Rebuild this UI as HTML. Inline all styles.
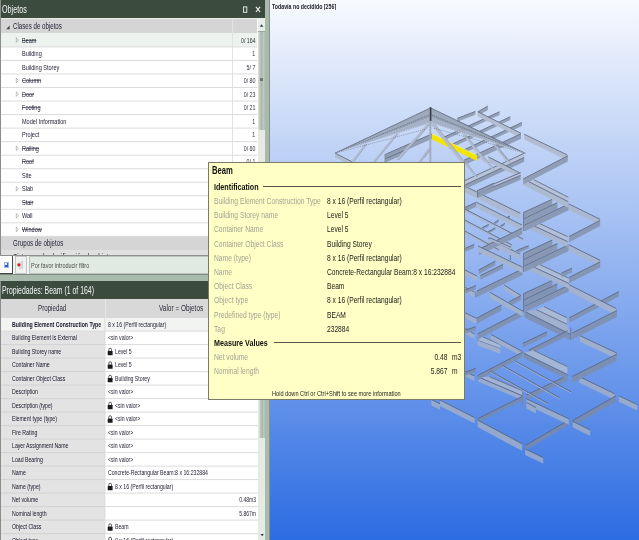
<!DOCTYPE html>
<html lang="es"><head><meta charset="utf-8"><title>Objetos</title>
<style>
html,body{margin:0;padding:0;}
body{width:639px;height:540px;overflow:hidden;position:relative;background:#fff;font-family:"Liberation Sans", sans-serif;}
.t{position:absolute;white-space:nowrap;display:block;}
.b{position:absolute;}
svg{position:absolute;left:0;top:0;}
</style></head><body>
<div class="b" style="left:0.00px;top:0.00px;width:265.20px;height:540.00px;background:#fff;"></div>
<div class="b" style="left:0.00px;top:0.00px;width:265.20px;height:17.70px;background:#3b4c3f;"></div>
<span class="t" style="left:2.20px;transform-origin:0 0;top:3.80px;font-size:20.80px;line-height:20.80px;color:#f4f4f4;font-weight:normal;transform:scale(0.3450,0.5);">Objetos</span>
<svg width="639" height="540" style="pointer-events:none"><rect x="243.6" y="6.9" width="3.2" height="5.4" fill="none" stroke="#f2f2f2" stroke-width="0.9"/><path d="M255.9 6.9 L260.1 12.0 M260.1 6.9 L255.9 12.0" stroke="#f4f4f4" stroke-width="1.1" fill="none"/></svg>
<div class="b" style="left:0.00px;top:17.70px;width:265.20px;height:1.70px;background:#e9eee9;"></div>
<div class="b" style="left:0.00px;top:19.40px;width:257.30px;height:14.00px;background:#d5d5d5;"></div>
<span class="t" style="left:12.70px;transform-origin:0 0;top:22.02px;font-size:17.20px;line-height:17.20px;color:#23233a;font-weight:normal;transform:scale(0.3575,0.5);">Clases de objetos</span>
<svg width="639" height="540" style="pointer-events:none"><path d="M6.2 29.2 L9.6 29.2 L9.6 25.6 Z" fill="#444"/></svg>
<div class="b" style="left:0.00px;top:33.40px;width:257.30px;height:13.53px;background:#eef2ee;"></div>
<span class="t" style="left:22.00px;transform-origin:0 0;top:36.52px;font-size:14.60px;line-height:14.60px;color:#1c1c30;font-weight:normal;transform:scale(0.3800,0.5);text-decoration:line-through;">Beam</span>
<span class="t" style="right:383.40px;transform-origin:100% 0;top:36.52px;font-size:14.60px;line-height:14.60px;color:#33333f;font-weight:normal;transform:scale(0.3600,0.5);">0/ 164</span>
<span class="t" style="left:22.00px;transform-origin:0 0;top:50.05px;font-size:14.60px;line-height:14.60px;color:#1c1c30;font-weight:normal;transform:scale(0.3800,0.5);">Building</span>
<span class="t" style="right:383.40px;transform-origin:100% 0;top:50.05px;font-size:14.60px;line-height:14.60px;color:#33333f;font-weight:normal;transform:scale(0.3600,0.5);">1</span>
<span class="t" style="left:22.00px;transform-origin:0 0;top:63.58px;font-size:14.60px;line-height:14.60px;color:#1c1c30;font-weight:normal;transform:scale(0.3800,0.5);">Building Storey</span>
<span class="t" style="right:383.40px;transform-origin:100% 0;top:63.58px;font-size:14.60px;line-height:14.60px;color:#33333f;font-weight:normal;transform:scale(0.3600,0.5);">5/ 7</span>
<span class="t" style="left:22.00px;transform-origin:0 0;top:77.11px;font-size:14.60px;line-height:14.60px;color:#1c1c30;font-weight:normal;transform:scale(0.3800,0.5);text-decoration:line-through;">Column</span>
<span class="t" style="right:383.40px;transform-origin:100% 0;top:77.11px;font-size:14.60px;line-height:14.60px;color:#33333f;font-weight:normal;transform:scale(0.3600,0.5);">0/ 80</span>
<span class="t" style="left:22.00px;transform-origin:0 0;top:90.64px;font-size:14.60px;line-height:14.60px;color:#1c1c30;font-weight:normal;transform:scale(0.3800,0.5);text-decoration:line-through;">Door</span>
<span class="t" style="right:383.40px;transform-origin:100% 0;top:90.64px;font-size:14.60px;line-height:14.60px;color:#33333f;font-weight:normal;transform:scale(0.3600,0.5);">0/ 23</span>
<span class="t" style="left:22.00px;transform-origin:0 0;top:104.17px;font-size:14.60px;line-height:14.60px;color:#1c1c30;font-weight:normal;transform:scale(0.3800,0.5);text-decoration:line-through;">Footing</span>
<span class="t" style="right:383.40px;transform-origin:100% 0;top:104.17px;font-size:14.60px;line-height:14.60px;color:#33333f;font-weight:normal;transform:scale(0.3600,0.5);">0/ 21</span>
<span class="t" style="left:22.00px;transform-origin:0 0;top:117.70px;font-size:14.60px;line-height:14.60px;color:#1c1c30;font-weight:normal;transform:scale(0.3800,0.5);">Model Information</span>
<span class="t" style="right:383.40px;transform-origin:100% 0;top:117.70px;font-size:14.60px;line-height:14.60px;color:#33333f;font-weight:normal;transform:scale(0.3600,0.5);">1</span>
<span class="t" style="left:22.00px;transform-origin:0 0;top:131.23px;font-size:14.60px;line-height:14.60px;color:#1c1c30;font-weight:normal;transform:scale(0.3800,0.5);">Project</span>
<span class="t" style="right:383.40px;transform-origin:100% 0;top:131.23px;font-size:14.60px;line-height:14.60px;color:#33333f;font-weight:normal;transform:scale(0.3600,0.5);">1</span>
<span class="t" style="left:22.00px;transform-origin:0 0;top:144.76px;font-size:14.60px;line-height:14.60px;color:#1c1c30;font-weight:normal;transform:scale(0.3800,0.5);text-decoration:line-through;">Railing</span>
<span class="t" style="right:383.40px;transform-origin:100% 0;top:144.76px;font-size:14.60px;line-height:14.60px;color:#33333f;font-weight:normal;transform:scale(0.3600,0.5);">0/ 60</span>
<span class="t" style="left:22.00px;transform-origin:0 0;top:158.29px;font-size:14.60px;line-height:14.60px;color:#1c1c30;font-weight:normal;transform:scale(0.3800,0.5);text-decoration:line-through;">Roof</span>
<span class="t" style="right:383.40px;transform-origin:100% 0;top:158.29px;font-size:14.60px;line-height:14.60px;color:#33333f;font-weight:normal;transform:scale(0.3600,0.5);">0/ 1</span>
<span class="t" style="left:22.00px;transform-origin:0 0;top:171.82px;font-size:14.60px;line-height:14.60px;color:#1c1c30;font-weight:normal;transform:scale(0.3800,0.5);">Site</span>
<span class="t" style="left:22.00px;transform-origin:0 0;top:185.35px;font-size:14.60px;line-height:14.60px;color:#1c1c30;font-weight:normal;transform:scale(0.3800,0.5);">Slab</span>
<span class="t" style="left:22.00px;transform-origin:0 0;top:198.88px;font-size:14.60px;line-height:14.60px;color:#1c1c30;font-weight:normal;transform:scale(0.3800,0.5);text-decoration:line-through;">Stair</span>
<span class="t" style="left:22.00px;transform-origin:0 0;top:212.41px;font-size:14.60px;line-height:14.60px;color:#1c1c30;font-weight:normal;transform:scale(0.3800,0.5);">Wall</span>
<span class="t" style="left:22.00px;transform-origin:0 0;top:225.94px;font-size:14.60px;line-height:14.60px;color:#1c1c30;font-weight:normal;transform:scale(0.3800,0.5);text-decoration:line-through;">Window</span>
<svg width="639" height="540" style="pointer-events:none"><path d="M16.3 37.60 L18.4 40.00 L16.3 42.40 Z" fill="none" stroke="#9a9a9a" stroke-width="0.6"/><path d="M16.3 78.19 L18.4 80.59 L16.3 82.99 Z" fill="none" stroke="#9a9a9a" stroke-width="0.6"/><path d="M16.3 91.72 L18.4 94.12 L16.3 96.52 Z" fill="none" stroke="#9a9a9a" stroke-width="0.6"/><path d="M16.3 145.84 L18.4 148.24 L16.3 150.64 Z" fill="none" stroke="#9a9a9a" stroke-width="0.6"/><path d="M16.3 186.43 L18.4 188.83 L16.3 191.23 Z" fill="none" stroke="#9a9a9a" stroke-width="0.6"/><path d="M16.3 213.49 L18.4 215.89 L16.3 218.29 Z" fill="none" stroke="#9a9a9a" stroke-width="0.6"/><path d="M16.3 227.02 L18.4 229.42 L16.3 231.82 Z" fill="none" stroke="#9a9a9a" stroke-width="0.6"/></svg>
<div class="b" style="left:231.90px;top:19.40px;width:0.80px;height:217.00px;background:#e2e2e2;"></div>
<div class="b" style="left:0.00px;top:236.35px;width:257.30px;height:13.60px;background:#d5d5d5;"></div>
<span class="t" style="left:12.70px;transform-origin:0 0;top:239.07px;font-size:17.20px;line-height:17.20px;color:#23233a;font-weight:normal;transform:scale(0.3575,0.5);">Grupos de objetos</span>
<div class="b" style="left:0.00px;top:249.95px;width:257.30px;height:5.50px;background:#e0e0e0;"></div>
<div class="b" style="left:0;top:249.95px;width:257px;height:5.2px;overflow:hidden">
<span class="t" style="left:12.7px;top:2.6px;font-size:17.2px;line-height:17.2px;color:#23233a;transform-origin:0 0;transform:scale(0.37,0.5)">Sistemas de clasificación de objetos</span></div>
<div class="b" style="left:257.60px;top:19.40px;width:7.60px;height:236.00px;background:#e6ebe6;"></div>
<div class="b" style="left:257.60px;top:19.40px;width:7.60px;height:11.60px;background:#e9eee9;"></div>
<svg width="639" height="540" style="pointer-events:none"><path d="M259.8 26.8 L263.4 26.8 L261.6 24.3 Z" fill="#2a3f4c"/></svg>
<div class="b" style="left:257.60px;top:31.00px;width:7.60px;height:0.70px;background:#9aa79b;"></div>
<div class="b" style="left:258.00px;top:31.50px;width:7.20px;height:98.50px;background:linear-gradient(90deg,#dfe6df 0%,#bcc8bd 25%,#aab9ab 55%,#bfcbc0 80%,#aebcaf 100%);"></div>
<div class="b" style="left:260.00px;top:77.60px;width:3.20px;height:0.60px;background:#6c7a6e;"></div>
<div class="b" style="left:260.00px;top:79.00px;width:3.20px;height:0.60px;background:#6c7a6e;"></div>
<div class="b" style="left:260.00px;top:80.40px;width:3.20px;height:0.60px;background:#6c7a6e;"></div>
<div class="b" style="left:265.00px;top:0.00px;width:5.10px;height:540.00px;background:#a9b9ab;"></div>
<div class="b" style="left:269.10px;top:0.00px;width:1.00px;height:540.00px;background:#84948a;"></div>
<div class="b" style="left:0.00px;top:0.00px;width:1.00px;height:255.50px;background:#8c8c8c;"></div>
<div class="b" style="left:0.00px;top:255.50px;width:265.20px;height:19.00px;background:#f3f5f3;"></div>
<div class="b" style="left:0.00px;top:255.20px;width:265.20px;height:0.80px;background:#8f8f8f;"></div>
<div class="b" style="left:0.00px;top:255.90px;width:12.60px;height:18.40px;background:#ffffff;border-right:1.2px solid #4a4a4a;border-bottom:1.2px solid #444;box-sizing:border-box;"></div>
<div class="b" style="left:3.60px;top:261.50px;width:5.40px;height:6.20px;background:#2f62d8;border:0.6px solid #9bb4ee;box-sizing:border-box;"></div>
<div class="b" style="left:5.00px;top:263.10px;width:2.00px;height:2.20px;background:#e8efff;"></div>
<div class="b" style="left:14.60px;top:256.10px;width:12.60px;height:17.60px;background:#f1f1f1;border:0.7px solid #c4c4c4;box-sizing:border-box;"></div>
<svg width="639" height="540" style="pointer-events:none"><path d="M18.0 263.1 L19.6 263.1 L22.6 260.7 L22.6 268.9 L19.6 266.5 L18.0 266.5 Z" fill="#d9d9d9" stroke="#b5b5b5" stroke-width="0.4"/><circle cx="18.9" cy="264.8" r="1.6" fill="#e02020"/><path d="M19.2 266.7 L20.4 269.7" stroke="#c9c9c9" stroke-width="1"/></svg>
<div class="b" style="left:29.00px;top:256.30px;width:236.20px;height:17.40px;background:#e1e9e3;border:0.7px solid #b9c4bb;box-sizing:border-box;"></div>
<span class="t" style="left:31.20px;transform-origin:0 0;top:261.52px;font-size:14.60px;line-height:14.60px;color:#4a4f4c;font-weight:normal;transform:scale(0.3760,0.5);">Por favor introducir filtro</span>
<div class="b" style="left:0.00px;top:274.50px;width:265.20px;height:6.50px;background:#a9bbad;"></div>
<div class="b" style="left:0.00px;top:274.20px;width:265.20px;height:0.80px;background:#7e8a80;"></div>
<div class="b" style="left:0.00px;top:281.00px;width:265.20px;height:17.60px;background:#3b4c3f;"></div>
<span class="t" style="left:2.20px;transform-origin:0 0;top:284.77px;font-size:20.40px;line-height:20.40px;color:#f4f4f4;font-weight:normal;transform:scale(0.3380,0.5);">Propiedades: Beam (1 of 164)</span>
<div class="b" style="left:0.00px;top:298.60px;width:258.40px;height:19.00px;background:#d8d8d8;"></div>
<div class="b" style="left:104.60px;top:298.60px;width:0.80px;height:19.00px;background:#e6e6e6;"></div>
<span class="t" style="left:52.30px;transform-origin:0 0;margin-left:-14.5px;top:304.19px;font-size:16.80px;line-height:16.80px;color:#2a2a3a;font-weight:normal;transform:scale(0.3700,0.5);">Propiedad</span>
<span class="t" style="left:158.60px;transform-origin:0 0;top:304.19px;font-size:16.80px;line-height:16.80px;color:#2a2a3a;font-weight:normal;transform:scale(0.3850,0.5);">Valor = Objetos</span>
<div class="b" style="left:0.00px;top:317.60px;width:258.40px;height:13.50px;background:#f1f4f1;"></div>
<span class="t" style="left:12.20px;transform-origin:0 0;top:320.91px;font-size:14.40px;line-height:14.40px;color:#15152a;font-weight:bold;transform:scale(0.3600,0.5);">Building Element Construction Type</span>
<span class="t" style="left:107.80px;transform-origin:0 0;top:320.91px;font-size:14.40px;line-height:14.40px;color:#1c1c30;font-weight:normal;transform:scale(0.3600,0.5);">8 x 16 (Perfil rectangular)</span>
<div class="b" style="left:0.00px;top:331.10px;width:104.80px;height:13.50px;background:#e3e3e3;"></div>
<div class="b" style="left:104.80px;top:331.10px;width:153.60px;height:13.50px;background:#ffffff;"></div>
<span class="t" style="left:12.20px;transform-origin:0 0;top:334.41px;font-size:14.40px;line-height:14.40px;color:#15152a;font-weight:normal;transform:scale(0.3600,0.5);">Building Element Is External</span>
<span class="t" style="left:107.80px;transform-origin:0 0;top:334.41px;font-size:14.40px;line-height:14.40px;color:#1c1c30;font-weight:normal;transform:scale(0.3600,0.5);">&lt;sin valor&gt;</span>
<div class="b" style="left:0.00px;top:344.60px;width:104.80px;height:13.50px;background:#e3e3e3;"></div>
<div class="b" style="left:104.80px;top:344.60px;width:153.60px;height:13.50px;background:#ffffff;"></div>
<span class="t" style="left:12.20px;transform-origin:0 0;top:347.91px;font-size:14.40px;line-height:14.40px;color:#15152a;font-weight:normal;transform:scale(0.3600,0.5);">Building Storey name</span>
<span class="t" style="left:115.00px;transform-origin:0 0;top:347.91px;font-size:14.40px;line-height:14.40px;color:#1c1c30;font-weight:normal;transform:scale(0.3600,0.5);">Level 5</span>
<div class="b" style="left:0.00px;top:358.10px;width:104.80px;height:13.50px;background:#e3e3e3;"></div>
<div class="b" style="left:104.80px;top:358.10px;width:153.60px;height:13.50px;background:#ffffff;"></div>
<span class="t" style="left:12.20px;transform-origin:0 0;top:361.41px;font-size:14.40px;line-height:14.40px;color:#15152a;font-weight:normal;transform:scale(0.3600,0.5);">Container Name</span>
<span class="t" style="left:115.00px;transform-origin:0 0;top:361.41px;font-size:14.40px;line-height:14.40px;color:#1c1c30;font-weight:normal;transform:scale(0.3600,0.5);">Level 5</span>
<div class="b" style="left:0.00px;top:371.60px;width:104.80px;height:13.50px;background:#e3e3e3;"></div>
<div class="b" style="left:104.80px;top:371.60px;width:153.60px;height:13.50px;background:#ffffff;"></div>
<span class="t" style="left:12.20px;transform-origin:0 0;top:374.91px;font-size:14.40px;line-height:14.40px;color:#15152a;font-weight:normal;transform:scale(0.3600,0.5);">Container Object Class</span>
<span class="t" style="left:115.00px;transform-origin:0 0;top:374.91px;font-size:14.40px;line-height:14.40px;color:#1c1c30;font-weight:normal;transform:scale(0.3600,0.5);">Building Storey</span>
<div class="b" style="left:0.00px;top:385.10px;width:104.80px;height:13.50px;background:#e3e3e3;"></div>
<div class="b" style="left:104.80px;top:385.10px;width:153.60px;height:13.50px;background:#ffffff;"></div>
<span class="t" style="left:12.20px;transform-origin:0 0;top:388.41px;font-size:14.40px;line-height:14.40px;color:#15152a;font-weight:normal;transform:scale(0.3600,0.5);">Description</span>
<span class="t" style="left:107.80px;transform-origin:0 0;top:388.41px;font-size:14.40px;line-height:14.40px;color:#1c1c30;font-weight:normal;transform:scale(0.3600,0.5);">&lt;sin valor&gt;</span>
<div class="b" style="left:0.00px;top:398.60px;width:104.80px;height:13.50px;background:#e3e3e3;"></div>
<div class="b" style="left:104.80px;top:398.60px;width:153.60px;height:13.50px;background:#ffffff;"></div>
<span class="t" style="left:12.20px;transform-origin:0 0;top:401.91px;font-size:14.40px;line-height:14.40px;color:#15152a;font-weight:normal;transform:scale(0.3600,0.5);">Description (type)</span>
<span class="t" style="left:115.00px;transform-origin:0 0;top:401.91px;font-size:14.40px;line-height:14.40px;color:#1c1c30;font-weight:normal;transform:scale(0.3600,0.5);">&lt;sin valor&gt;</span>
<div class="b" style="left:0.00px;top:412.10px;width:104.80px;height:13.50px;background:#e3e3e3;"></div>
<div class="b" style="left:104.80px;top:412.10px;width:153.60px;height:13.50px;background:#ffffff;"></div>
<span class="t" style="left:12.20px;transform-origin:0 0;top:415.41px;font-size:14.40px;line-height:14.40px;color:#15152a;font-weight:normal;transform:scale(0.3600,0.5);">Element type (type)</span>
<span class="t" style="left:115.00px;transform-origin:0 0;top:415.41px;font-size:14.40px;line-height:14.40px;color:#1c1c30;font-weight:normal;transform:scale(0.3600,0.5);">&lt;sin valor&gt;</span>
<div class="b" style="left:0.00px;top:425.60px;width:104.80px;height:13.50px;background:#e3e3e3;"></div>
<div class="b" style="left:104.80px;top:425.60px;width:153.60px;height:13.50px;background:#ffffff;"></div>
<span class="t" style="left:12.20px;transform-origin:0 0;top:428.91px;font-size:14.40px;line-height:14.40px;color:#15152a;font-weight:normal;transform:scale(0.3600,0.5);">Fire Rating</span>
<span class="t" style="left:107.80px;transform-origin:0 0;top:428.91px;font-size:14.40px;line-height:14.40px;color:#1c1c30;font-weight:normal;transform:scale(0.3600,0.5);">&lt;sin valor&gt;</span>
<div class="b" style="left:0.00px;top:439.10px;width:104.80px;height:13.50px;background:#e3e3e3;"></div>
<div class="b" style="left:104.80px;top:439.10px;width:153.60px;height:13.50px;background:#ffffff;"></div>
<span class="t" style="left:12.20px;transform-origin:0 0;top:442.41px;font-size:14.40px;line-height:14.40px;color:#15152a;font-weight:normal;transform:scale(0.3600,0.5);">Layer Assignment Name</span>
<span class="t" style="left:107.80px;transform-origin:0 0;top:442.41px;font-size:14.40px;line-height:14.40px;color:#1c1c30;font-weight:normal;transform:scale(0.3600,0.5);">&lt;sin valor&gt;</span>
<div class="b" style="left:0.00px;top:452.60px;width:104.80px;height:13.50px;background:#e3e3e3;"></div>
<div class="b" style="left:104.80px;top:452.60px;width:153.60px;height:13.50px;background:#ffffff;"></div>
<span class="t" style="left:12.20px;transform-origin:0 0;top:455.91px;font-size:14.40px;line-height:14.40px;color:#15152a;font-weight:normal;transform:scale(0.3600,0.5);">Load Bearing</span>
<span class="t" style="left:107.80px;transform-origin:0 0;top:455.91px;font-size:14.40px;line-height:14.40px;color:#1c1c30;font-weight:normal;transform:scale(0.3600,0.5);">&lt;sin valor&gt;</span>
<div class="b" style="left:0.00px;top:466.10px;width:104.80px;height:13.50px;background:#e3e3e3;"></div>
<div class="b" style="left:104.80px;top:466.10px;width:153.60px;height:13.50px;background:#ffffff;"></div>
<span class="t" style="left:12.20px;transform-origin:0 0;top:469.41px;font-size:14.40px;line-height:14.40px;color:#15152a;font-weight:normal;transform:scale(0.3600,0.5);">Name</span>
<span class="t" style="left:107.80px;transform-origin:0 0;top:469.41px;font-size:14.40px;line-height:14.40px;color:#1c1c30;font-weight:normal;transform:scale(0.3600,0.5);">Concrete-Rectangular Beam:8 x 16:232884</span>
<div class="b" style="left:0.00px;top:479.60px;width:104.80px;height:13.50px;background:#e3e3e3;"></div>
<div class="b" style="left:104.80px;top:479.60px;width:153.60px;height:13.50px;background:#ffffff;"></div>
<span class="t" style="left:12.20px;transform-origin:0 0;top:482.91px;font-size:14.40px;line-height:14.40px;color:#15152a;font-weight:normal;transform:scale(0.3600,0.5);">Name (type)</span>
<span class="t" style="left:115.00px;transform-origin:0 0;top:482.91px;font-size:14.40px;line-height:14.40px;color:#1c1c30;font-weight:normal;transform:scale(0.3600,0.5);">8 x 16 (Perfil rectangular)</span>
<div class="b" style="left:0.00px;top:493.10px;width:104.80px;height:13.50px;background:#e3e3e3;"></div>
<div class="b" style="left:104.80px;top:493.10px;width:153.60px;height:13.50px;background:#ffffff;"></div>
<span class="t" style="left:12.20px;transform-origin:0 0;top:496.41px;font-size:14.40px;line-height:14.40px;color:#15152a;font-weight:normal;transform:scale(0.3600,0.5);">Net volume</span>
<span class="t" style="right:382.60px;transform-origin:100% 0;top:496.41px;font-size:14.40px;line-height:14.40px;color:#1c1c30;font-weight:normal;transform:scale(0.3500,0.5);">0.48m3</span>
<div class="b" style="left:0.00px;top:506.60px;width:104.80px;height:13.50px;background:#e3e3e3;"></div>
<div class="b" style="left:104.80px;top:506.60px;width:153.60px;height:13.50px;background:#ffffff;"></div>
<span class="t" style="left:12.20px;transform-origin:0 0;top:509.91px;font-size:14.40px;line-height:14.40px;color:#15152a;font-weight:normal;transform:scale(0.3600,0.5);">Nominal length</span>
<span class="t" style="right:382.60px;transform-origin:100% 0;top:509.91px;font-size:14.40px;line-height:14.40px;color:#1c1c30;font-weight:normal;transform:scale(0.3500,0.5);">5.867m</span>
<div class="b" style="left:0.00px;top:520.10px;width:104.80px;height:13.50px;background:#e3e3e3;"></div>
<div class="b" style="left:104.80px;top:520.10px;width:153.60px;height:13.50px;background:#ffffff;"></div>
<span class="t" style="left:12.20px;transform-origin:0 0;top:523.41px;font-size:14.40px;line-height:14.40px;color:#15152a;font-weight:normal;transform:scale(0.3600,0.5);">Object Class</span>
<span class="t" style="left:115.00px;transform-origin:0 0;top:523.41px;font-size:14.40px;line-height:14.40px;color:#1c1c30;font-weight:normal;transform:scale(0.3600,0.5);">Beam</span>
<div class="b" style="left:0.00px;top:533.60px;width:104.80px;height:13.50px;background:#e3e3e3;"></div>
<div class="b" style="left:104.80px;top:533.60px;width:153.60px;height:13.50px;background:#ffffff;"></div>
<span class="t" style="left:12.20px;transform-origin:0 0;top:536.91px;font-size:14.40px;line-height:14.40px;color:#15152a;font-weight:normal;transform:scale(0.3600,0.5);">Object type</span>
<span class="t" style="left:115.00px;transform-origin:0 0;top:536.91px;font-size:14.40px;line-height:14.40px;color:#1c1c30;font-weight:normal;transform:scale(0.3600,0.5);">8 x 16 (Perfil rectangular)</span>
<svg width="639" height="540" style="pointer-events:none"><rect x="107.7" y="351.00" width="4.9" height="4.2" rx="0.5" fill="#1a1a1a"/><path d="M108.8 351.20 V349.70 A1.35 1.5 0 0 1 111.5 349.70 V351.20" fill="none" stroke="#333" stroke-width="0.8"/><rect x="107.7" y="364.50" width="4.9" height="4.2" rx="0.5" fill="#1a1a1a"/><path d="M108.8 364.70 V363.20 A1.35 1.5 0 0 1 111.5 363.20 V364.70" fill="none" stroke="#333" stroke-width="0.8"/><rect x="107.7" y="378.00" width="4.9" height="4.2" rx="0.5" fill="#1a1a1a"/><path d="M108.8 378.20 V376.70 A1.35 1.5 0 0 1 111.5 376.70 V378.20" fill="none" stroke="#333" stroke-width="0.8"/><rect x="107.7" y="405.00" width="4.9" height="4.2" rx="0.5" fill="#1a1a1a"/><path d="M108.8 405.20 V403.70 A1.35 1.5 0 0 1 111.5 403.70 V405.20" fill="none" stroke="#333" stroke-width="0.8"/><rect x="107.7" y="418.50" width="4.9" height="4.2" rx="0.5" fill="#1a1a1a"/><path d="M108.8 418.70 V417.20 A1.35 1.5 0 0 1 111.5 417.20 V418.70" fill="none" stroke="#333" stroke-width="0.8"/><rect x="107.7" y="486.00" width="4.9" height="4.2" rx="0.5" fill="#1a1a1a"/><path d="M108.8 486.20 V484.70 A1.35 1.5 0 0 1 111.5 484.70 V486.20" fill="none" stroke="#333" stroke-width="0.8"/><rect x="107.7" y="526.50" width="4.9" height="4.2" rx="0.5" fill="#1a1a1a"/><path d="M108.8 526.70 V525.20 A1.35 1.5 0 0 1 111.5 525.20 V526.70" fill="none" stroke="#333" stroke-width="0.8"/><rect x="107.7" y="540.00" width="4.9" height="4.2" rx="0.5" fill="#1a1a1a"/><path d="M108.8 540.20 V538.70 A1.35 1.5 0 0 1 111.5 538.70 V540.20" fill="none" stroke="#333" stroke-width="0.8"/></svg>
<svg width="639" height="540" style="pointer-events:none"><rect x="1.00" y="46.43" width="256.30" height="1.00" fill="#dcdcdc"/><rect x="1.00" y="59.96" width="256.30" height="1.00" fill="#dcdcdc"/><rect x="1.00" y="73.49" width="256.30" height="1.00" fill="#dcdcdc"/><rect x="1.00" y="87.02" width="256.30" height="1.00" fill="#dcdcdc"/><rect x="1.00" y="100.55" width="256.30" height="1.00" fill="#dcdcdc"/><rect x="1.00" y="114.08" width="256.30" height="1.00" fill="#dcdcdc"/><rect x="1.00" y="127.61" width="256.30" height="1.00" fill="#dcdcdc"/><rect x="1.00" y="141.14" width="256.30" height="1.00" fill="#dcdcdc"/><rect x="1.00" y="154.67" width="256.30" height="1.00" fill="#dcdcdc"/><rect x="1.00" y="168.20" width="256.30" height="1.00" fill="#dcdcdc"/><rect x="1.00" y="181.73" width="256.30" height="1.00" fill="#dcdcdc"/><rect x="1.00" y="195.26" width="256.30" height="1.00" fill="#dcdcdc"/><rect x="1.00" y="208.79" width="256.30" height="1.00" fill="#dcdcdc"/><rect x="1.00" y="222.32" width="256.30" height="1.00" fill="#dcdcdc"/><rect x="1.00" y="235.85" width="256.30" height="1.00" fill="#dcdcdc"/><rect x="1.00" y="330.60" width="103.80" height="1.00" fill="#dcdcdc"/><rect x="104.80" y="330.60" width="153.60" height="1.00" fill="#dcdcdc"/><rect x="1.00" y="344.10" width="103.80" height="1.00" fill="#d2d2d2"/><rect x="104.80" y="344.10" width="153.60" height="1.00" fill="#dcdcdc"/><rect x="1.00" y="357.60" width="103.80" height="1.00" fill="#d2d2d2"/><rect x="104.80" y="357.60" width="153.60" height="1.00" fill="#dcdcdc"/><rect x="1.00" y="371.10" width="103.80" height="1.00" fill="#d2d2d2"/><rect x="104.80" y="371.10" width="153.60" height="1.00" fill="#dcdcdc"/><rect x="1.00" y="384.60" width="103.80" height="1.00" fill="#d2d2d2"/><rect x="104.80" y="384.60" width="153.60" height="1.00" fill="#dcdcdc"/><rect x="1.00" y="398.10" width="103.80" height="1.00" fill="#d2d2d2"/><rect x="104.80" y="398.10" width="153.60" height="1.00" fill="#dcdcdc"/><rect x="1.00" y="411.60" width="103.80" height="1.00" fill="#d2d2d2"/><rect x="104.80" y="411.60" width="153.60" height="1.00" fill="#dcdcdc"/><rect x="1.00" y="425.10" width="103.80" height="1.00" fill="#d2d2d2"/><rect x="104.80" y="425.10" width="153.60" height="1.00" fill="#dcdcdc"/><rect x="1.00" y="438.60" width="103.80" height="1.00" fill="#d2d2d2"/><rect x="104.80" y="438.60" width="153.60" height="1.00" fill="#dcdcdc"/><rect x="1.00" y="452.10" width="103.80" height="1.00" fill="#d2d2d2"/><rect x="104.80" y="452.10" width="153.60" height="1.00" fill="#dcdcdc"/><rect x="1.00" y="465.60" width="103.80" height="1.00" fill="#d2d2d2"/><rect x="104.80" y="465.60" width="153.60" height="1.00" fill="#dcdcdc"/><rect x="1.00" y="479.10" width="103.80" height="1.00" fill="#d2d2d2"/><rect x="104.80" y="479.10" width="153.60" height="1.00" fill="#dcdcdc"/><rect x="1.00" y="492.60" width="103.80" height="1.00" fill="#d2d2d2"/><rect x="104.80" y="492.60" width="153.60" height="1.00" fill="#dcdcdc"/><rect x="1.00" y="506.10" width="103.80" height="1.00" fill="#d2d2d2"/><rect x="104.80" y="506.10" width="153.60" height="1.00" fill="#dcdcdc"/><rect x="1.00" y="519.60" width="103.80" height="1.00" fill="#d2d2d2"/><rect x="104.80" y="519.60" width="153.60" height="1.00" fill="#dcdcdc"/><rect x="1.00" y="533.10" width="103.80" height="1.00" fill="#d2d2d2"/><rect x="104.80" y="533.10" width="153.60" height="1.00" fill="#dcdcdc"/><rect x="1.00" y="546.60" width="103.80" height="1.00" fill="#d2d2d2"/><rect x="104.80" y="546.60" width="153.60" height="1.00" fill="#dcdcdc"/><rect x="104.50" y="317.60" width="0.9" height="223" fill="#d9d9d9"/></svg>
<div class="b" style="left:258.40px;top:298.60px;width:6.80px;height:242.00px;background:#e4eae4;"></div>
<div class="b" style="left:258.60px;top:298.60px;width:6.60px;height:139.20px;background:linear-gradient(90deg,#dfe6df 0%,#bcc8bd 25%,#aab9ab 55%,#bfcbc0 80%,#aebcaf 100%);"></div>
<svg width="639" height="540" style="pointer-events:none"><path d="M260.5 534.0 L263.9 534.0 L262.2 536.3 Z" fill="#2a3f4c"/></svg>
<div class="b" style="left:0.00px;top:281.00px;width:1.00px;height:259.00px;background:#8c8c8c;"></div>
<div class="b" style="left:270.10px;top:0.00px;width:368.90px;height:540.00px;background:linear-gradient(180deg,#f8fafe 0%,#2c6ce2 100%);"></div>
<span class="t" style="left:272.30px;transform-origin:0 0;top:2.07px;font-size:15.20px;line-height:15.20px;color:#1a1a22;font-weight:bold;transform:scale(0.3460,0.5);">Todavía no decidido [256]</span>
<svg width="639" height="540" viewBox="0 0 639 540" style="filter:blur(0.35px)"><path d="M567.4 375.5 L526.6 394.9 L526.6 399.9 L567.4 380.5 Z" fill="#798db3"/><path d="M567.4 375.5 L526.6 394.9" stroke="#5e6d8b" stroke-width="1.0" fill="none"/><path d="M579.0 376.4 L614.9 393.9 L614.9 399.9 L579.0 382.4 Z" fill="#98abcf"/><path d="M579.0 376.4 L614.9 393.9" stroke="#5e6d8b" stroke-width="1.0" fill="none"/><path d="M615.9 395.8 L572.8 420.5 L572.8 426.5 L615.9 401.8 Z" fill="#768bb3"/><path d="M615.9 395.8 L572.8 420.5" stroke="#5c6c8b" stroke-width="1.0" fill="none"/><path d="M618.8 395.8 L637.3 404.6 L637.3 410.6 L618.8 401.8 Z" fill="#97aace"/><path d="M618.8 395.8 L637.3 404.6" stroke="#5d6c8b" stroke-width="1.0" fill="none"/><path d="M572.7 421.3 L590.2 430.1 L590.2 436.1 L572.7 427.3 Z" fill="#94a8ce"/><path d="M572.7 421.3 L590.2 430.1" stroke="#5b6b8a" stroke-width="1.0" fill="none"/><path d="M477.6 376.7 L522.0 395.6 L522.0 390.6 L489.6 376.8 Z" fill="#a1b4d7" fill-opacity="1"/><path d="M489.6 376.8 L522.0 390.6" stroke="#667084" stroke-width="0.9" stroke-opacity="1" fill="none"/><path d="M477.6 376.7 L522.0 395.6 L522.0 400.1 L477.6 381.2 Z" fill="#98abcf"/><path d="M477.6 376.7 L522.0 395.6" stroke="#5e6d8b" stroke-width="1.0" fill="none"/><path d="M477.6 418.8 L522.6 396.3 L522.6 400.3 L477.6 422.8 Z" fill="#768bb3"/><path d="M477.6 418.8 L522.6 396.3" stroke="#5c6c8b" stroke-width="1.0" fill="none"/><path d="M477.6 420.0 L522.1 443.8 L522.1 450.8 L477.6 427.0 Z" fill="#93a8ce"/><path d="M477.6 420.0 L522.1 443.8" stroke="#5b6b8a" stroke-width="1.0" fill="none"/><path d="M525.1 445.6 L568.9 420.0 L568.9 425.0 L525.1 450.6 Z" fill="#7489b3"/><path d="M525.1 445.6 L568.9 420.0" stroke="#5b6b8a" stroke-width="1.0" fill="none"/><path d="M525.1 448.9 L543.2 457.6 L543.2 463.6 L525.1 454.9 Z" fill="#91a6ce"/><path d="M525.1 448.9 L543.2 457.6" stroke="#5a6a8a" stroke-width="1.0" fill="none"/><path d="M526.4 398.8 L568.9 418.8 L568.9 424.8 L526.4 404.8 Z" fill="#96a9ce"/><path d="M526.4 398.8 L568.9 418.8" stroke="#5c6c8b" stroke-width="1.0" fill="none"/><path d="M526.4 402.5 L535.9 407.5 L535.9 413.5 L526.4 408.5 Z" fill="#96aace"/><path d="M526.4 402.5 L535.9 407.5" stroke="#5c6c8b" stroke-width="1.0" fill="none"/><path d="M440.0 400.0 L474.6 417.6 L474.6 423.6 L440.0 406.0 Z" fill="#96a9ce"/><path d="M440.0 400.0 L474.6 417.6" stroke="#5c6c8b" stroke-width="1.0" fill="none"/><path d="M431.4 399.5 L440.0 403.8 L440.0 409.8 L431.4 405.5 Z" fill="#96aace"/><path d="M431.4 399.5 L440.0 403.8" stroke="#5d6c8b" stroke-width="1.0" fill="none"/><path d="M522.6 392.5 L522.6 406.3" stroke="#7d899b" stroke-width="1.2" stroke-opacity="1" fill="none"/><path d="M544.1 306.7 L567.0 317.8 L567.0 324.2 L536.3 309.6 Z" fill="#a9b9d8" fill-opacity="1"/><path d="M544.1 306.7 L567.0 317.8" stroke="#667084" stroke-width="0.9" stroke-opacity="1" fill="none"/><path d="M536.3 309.6 L567.0 324.2 L570.3 334.3 L524.7 311.4 Z" fill="#9fb0d0" fill-opacity="1"/><path d="M536.3 309.6 L567.0 324.2" stroke="#667084" stroke-width="0.9" stroke-opacity="1" fill="none"/><path d="M524.7 311.4 L570.3 334.3 L570.3 340.3 L524.7 317.4 Z" fill="#7f91b4"/><path d="M524.7 311.4 L570.3 334.3" stroke="#616f8b" stroke-width="1.0" fill="none"/><path d="M570.8 327.5 L570.8 340.0" stroke="#667084" stroke-width="0.9" stroke-opacity="1" fill="none"/><path d="M580.0 335.7 L616.9 353.1 L616.9 359.1 L580.0 341.7 Z" fill="#9daecf"/><path d="M580.0 335.7 L616.9 353.1" stroke="#606f8b" stroke-width="1.0" fill="none"/><path d="M616.9 354.1 L572.2 376.4 L572.2 383.0 L616.9 360.7 Z" fill="#7b8eb4"/><path d="M616.9 354.1 L572.2 376.4" stroke="#5f6e8b" stroke-width="1.0" fill="none"/><path d="M522.8 343.4 L547.0 331.8 L547.0 335.8 L522.8 347.4 Z" fill="#7e90b4"/><path d="M522.8 343.4 L547.0 331.8" stroke="#606f8b" stroke-width="1.0" fill="none"/><path d="M528.6 350.2 L567.4 330.8 L567.4 335.8 L528.6 355.2 Z" fill="#7d90b4"/><path d="M528.6 350.2 L567.4 330.8" stroke="#606f8b" stroke-width="1.0" fill="none"/><path d="M465.3 328.5 L474.5 334.0 L474.5 339.0 L465.3 333.5 Z" fill="#9eafcf"/><path d="M465.3 328.5 L474.5 334.0" stroke="#616f8b" stroke-width="1.0" fill="none"/><path d="M465.3 330.0 L475.9 326.7 L475.9 330.2 L465.3 333.5 Z" fill="#7f91b4"/><path d="M465.3 330.0 L475.9 326.7" stroke="#616f8b" stroke-width="1.0" fill="none"/><path d="M477.6 340.0 L500.3 348.3 L500.3 353.8 L477.6 345.5 Z" fill="#9daecf"/><path d="M477.6 340.0 L500.3 348.3" stroke="#606f8b" stroke-width="1.0" fill="none"/><path d="M477.6 340.0 L500.3 348.3 L500.3 344.5 L482.0 336.5 Z" fill="#a6b7d7" fill-opacity="1"/><path d="M482.0 336.5 L500.3 344.5" stroke="#667084" stroke-width="0.9" stroke-opacity="1" fill="none"/><path d="M490.9 334.4 L522.6 351.7 L522.6 356.7 L490.9 339.4 Z" fill="#9daecf"/><path d="M490.9 334.4 L522.6 351.7" stroke="#606f8b" stroke-width="1.0" fill="none"/><path d="M533.4 350.2 L567.4 366.7 L567.4 374.5 L523.7 353.1 Z" fill="#a4b6d7" fill-opacity="1"/><path d="M533.4 350.2 L567.4 366.7" stroke="#667084" stroke-width="0.9" stroke-opacity="1" fill="none"/><path d="M523.7 353.1 L567.4 374.5 L567.4 379.5 L523.7 358.1 Z" fill="#7b8eb4"/><path d="M523.7 353.1 L567.4 374.5" stroke="#5f6e8b" stroke-width="1.0" fill="none"/><path d="M522.6 352.2 L477.6 375.6 L477.6 380.2 L522.6 356.8 Z" fill="#7b8eb4"/><path d="M522.6 352.2 L477.6 375.6" stroke="#5f6e8b" stroke-width="1.0" fill="none"/><path d="M465.3 371.5 L474.5 376.0 L474.5 381.0 L465.3 376.5 Z" fill="#99accf"/><path d="M465.3 371.5 L474.5 376.0" stroke="#5e6d8b" stroke-width="1.0" fill="none"/><path d="M465.3 372.2 L475.9 368.3 L475.9 371.8 L465.3 375.7 Z" fill="#7a8eb3"/><path d="M465.3 372.2 L475.9 368.3" stroke="#5e6e8b" stroke-width="1.0" fill="none"/><path d="M515.0 360.9 L571.3 392.0 L571.3 393.6 L515.0 362.5 Z" fill="#99accf"/><path d="M515.0 360.9 L571.3 392.0" stroke="#5e6d8b" stroke-width="1.0" fill="none"/><path d="M502.0 365.2 L559.6 397.8 L559.6 399.4 L502.0 366.8 Z" fill="#99abcf"/><path d="M502.0 365.2 L559.6 397.8" stroke="#5e6d8b" stroke-width="1.0" fill="none"/><path d="M490.0 371.0 L548.0 403.5 L548.0 405.1 L490.0 372.6 Z" fill="#98abcf"/><path d="M490.0 371.0 L548.0 403.5" stroke="#5d6d8b" stroke-width="1.0" fill="none"/><path d="M523.5 293.7 L552.3 280.4 L552.3 286.2 L523.5 299.5 Z" fill="#8394b5"/><path d="M523.5 293.7 L552.3 280.4" stroke="#63718c" stroke-width="1.0" fill="none"/><path d="M523.5 300.1 L557.3 283.9 L557.3 289.9 L523.5 306.1 Z" fill="#8294b5"/><path d="M523.5 300.1 L557.3 283.9" stroke="#63718c" stroke-width="1.0" fill="none"/><path d="M524.2 306.4 L568.5 285.3 L568.5 291.5 L524.2 312.6 Z" fill="#8293b5"/><path d="M524.2 306.4 L568.5 285.3" stroke="#63718b" stroke-width="1.0" fill="none"/><path d="M523.5 293.7 L523.5 312.2" stroke="#667084" stroke-width="0.8" stroke-opacity="1" fill="none"/><path d="M524.1 262.5 L569.2 283.6 L569.2 278.4 L538.1 263.8 Z" fill="#adbcd8" fill-opacity="1"/><path d="M538.1 263.8 L569.2 278.4" stroke="#667084" stroke-width="0.9" stroke-opacity="1" fill="none"/><path d="M524.1 262.5 L569.2 283.6 L569.2 288.8 L524.1 267.7 Z" fill="#a4b3d0"/><path d="M524.1 262.5 L569.2 283.6" stroke="#64718c" stroke-width="1.0" fill="none"/><path d="M618.8 291.6 L569.3 317.8 L569.3 322.8 L618.8 296.6 Z" fill="#8193b4"/><path d="M618.8 291.6 L569.3 317.8" stroke="#62708b" stroke-width="1.0" fill="none"/><path d="M569.3 284.8 L616.4 308.6 L616.4 315.2 L569.3 291.4 Z" fill="#a2b2d0"/><path d="M569.3 284.8 L616.4 308.6" stroke="#63708b" stroke-width="1.0" fill="none"/><path d="M616.9 310.5 L572.2 333.0 L572.2 339.6 L616.9 317.1 Z" fill="#7f91b4"/><path d="M616.9 310.5 L572.2 333.0" stroke="#61708b" stroke-width="1.0" fill="none"/><path d="M476.4 318.3 L501.4 305.0 L501.4 310.5 L476.4 323.8 Z" fill="#8092b4"/><path d="M476.4 318.3 L501.4 305.0" stroke="#62708b" stroke-width="1.0" fill="none"/><path d="M465.3 312.8 L476.4 318.3 L476.4 323.8 L465.3 318.3 Z" fill="#a0b0d0"/><path d="M465.3 312.8 L476.4 318.3" stroke="#62708b" stroke-width="1.0" fill="none"/><path d="M522.6 310.6 L477.6 333.9 L477.6 339.4 L522.6 316.1 Z" fill="#7f91b4"/><path d="M522.6 310.6 L477.6 333.9" stroke="#616f8b" stroke-width="1.0" fill="none"/><path d="M523.5 253.3 L552.3 240.0 L552.3 245.8 L523.5 259.1 Z" fill="#8797b5"/><path d="M523.5 253.3 L552.3 240.0" stroke="#65728c" stroke-width="1.0" fill="none"/><path d="M523.5 259.7 L557.3 243.5 L557.3 249.5 L523.5 265.7 Z" fill="#8797b5"/><path d="M523.5 259.7 L557.3 243.5" stroke="#65728c" stroke-width="1.0" fill="none"/><path d="M524.2 266.0 L568.5 244.9 L568.5 251.1 L524.2 272.2 Z" fill="#8696b5"/><path d="M524.2 266.0 L568.5 244.9" stroke="#65728c" stroke-width="1.0" fill="none"/><path d="M523.5 253.3 L523.5 271.8" stroke="#667084" stroke-width="0.8" stroke-opacity="1" fill="none"/><path d="M524.0 221.2 L567.5 241.6 L567.5 236.6 L538.0 222.8 Z" fill="#b2bfd9" fill-opacity="1"/><path d="M538.0 222.8 L567.5 236.6" stroke="#667084" stroke-width="0.9" stroke-opacity="1" fill="none"/><path d="M524.0 221.2 L567.5 241.6 L567.5 247.1 L524.0 226.7 Z" fill="#a9b6d1"/><path d="M524.0 221.2 L567.5 241.6" stroke="#66738c" stroke-width="1.0" fill="none"/><path d="M569.2 244.9 L600.2 260.4 L600.2 266.2 L569.2 250.7 Z" fill="#a6b5d1"/><path d="M569.2 244.9 L600.2 260.4" stroke="#65728c" stroke-width="1.0" fill="none"/><path d="M600.2 261.8 L569.2 277.3 L569.2 283.1 L600.2 267.6 Z" fill="#8595b5"/><path d="M600.2 261.8 L569.2 277.3" stroke="#64728c" stroke-width="1.0" fill="none"/><path d="M572.0 268.1 L561.5 273.0 L561.5 277.2 L572.0 272.3 Z" fill="#8595b5"/><path d="M572.0 268.1 L561.5 273.0" stroke="#64728c" stroke-width="1.0" fill="none"/><path d="M488.0 238.0 L520.0 254.0 L520.0 259.6 L488.0 243.6 Z" fill="#a7b5d1"/><path d="M488.0 238.0 L520.0 254.0" stroke="#65728c" stroke-width="1.0" fill="none"/><path d="M522.6 268.9 L477.0 291.0 L477.0 297.0 L522.6 274.9 Z" fill="#8495b5"/><path d="M522.6 268.9 L477.0 291.0" stroke="#64718c" stroke-width="1.0" fill="none"/><path d="M528.7 245.6 L516.4 250.6 L516.4 253.6 L528.7 248.6 Z" fill="#8797b5"/><path d="M528.7 245.6 L516.4 250.6" stroke="#65728c" stroke-width="1.0" fill="none"/><path d="M495.3 261.1 L478.7 270.0 L478.7 274.2 L495.3 265.3 Z" fill="#8596b5"/><path d="M495.3 261.1 L478.7 270.0" stroke="#64728c" stroke-width="1.0" fill="none"/><path d="M503.1 264.4 L480.3 275.6 L480.3 279.8 L503.1 268.6 Z" fill="#8595b5"/><path d="M503.1 264.4 L480.3 275.6" stroke="#64728c" stroke-width="1.0" fill="none"/><path d="M504.2 285.0 L520.9 295.6 L520.9 300.6 L504.2 290.0 Z" fill="#a2b2d0"/><path d="M504.2 285.0 L520.9 295.6" stroke="#63718c" stroke-width="1.0" fill="none"/><path d="M520.9 295.6 L509.2 301.7 L509.2 306.2 L520.9 300.1 Z" fill="#8293b5"/><path d="M520.9 295.6 L509.2 301.7" stroke="#62708b" stroke-width="1.0" fill="none"/><path d="M489.8 292.2 L522.6 311.1 L522.6 316.6 L489.8 297.7 Z" fill="#a1b1d0"/><path d="M489.8 292.2 L522.6 311.1" stroke="#62708b" stroke-width="1.0" fill="none"/><path d="M465.3 287.5 L474.5 292.0 L474.5 297.0 L465.3 292.5 Z" fill="#a2b2d0"/><path d="M465.3 287.5 L474.5 292.0" stroke="#63718c" stroke-width="1.0" fill="none"/><path d="M465.3 290.0 L475.9 285.6 L475.9 289.1 L465.3 293.5 Z" fill="#8394b5"/><path d="M465.3 290.0 L475.9 285.6" stroke="#63718c" stroke-width="1.0" fill="none"/><path d="M475.9 291.7 L475.9 297.2" stroke="#667084" stroke-width="0.9" stroke-opacity="1" fill="none"/><path d="M465.0 270.0 L477.0 276.0 L477.0 281.0 L465.0 275.0 Z" fill="#a4b3d0"/><path d="M465.0 270.0 L477.0 276.0" stroke="#64718c" stroke-width="1.0" fill="none"/><path d="M523.5 212.5 L552.3 199.2 L552.3 205.0 L523.5 218.3 Z" fill="#8c9ab6"/><path d="M523.5 212.5 L552.3 199.2" stroke="#68748c" stroke-width="1.0" fill="none"/><path d="M523.5 218.9 L557.3 202.7 L557.3 208.7 L523.5 224.9 Z" fill="#8b9ab6"/><path d="M523.5 218.9 L557.3 202.7" stroke="#67748c" stroke-width="1.0" fill="none"/><path d="M524.2 225.2 L568.5 204.1 L568.5 210.3 L524.2 231.4 Z" fill="#8b99b6"/><path d="M524.2 225.2 L568.5 204.1" stroke="#67748c" stroke-width="1.0" fill="none"/><path d="M523.5 212.5 L523.5 231.0" stroke="#667084" stroke-width="0.8" stroke-opacity="1" fill="none"/><path d="M523.3 178.9 L568.3 201.7 L568.3 197.2 L533.9 179.8 Z" fill="#b6c2d9" fill-opacity="1"/><path d="M533.9 179.8 L568.3 197.2" stroke="#667084" stroke-width="0.9" stroke-opacity="1" fill="none"/><path d="M523.3 178.9 L568.3 201.7 L568.3 207.7 L523.3 184.9 Z" fill="#adb9d1"/><path d="M523.3 178.9 L568.3 201.7" stroke="#69758c" stroke-width="1.0" fill="none"/><path d="M569.2 204.1 L600.0 219.3 L600.0 225.1 L569.2 209.9 Z" fill="#abb8d1"/><path d="M569.2 204.1 L600.0 219.3" stroke="#67748c" stroke-width="1.0" fill="none"/><path d="M600.2 220.3 L569.2 236.5 L569.2 242.3 L600.2 226.1 Z" fill="#8998b6"/><path d="M600.2 220.3 L569.2 236.5" stroke="#66738c" stroke-width="1.0" fill="none"/><path d="M465.0 186.2 L520.3 213.3 L520.3 219.7 L465.0 192.6 Z" fill="#acb9d1"/><path d="M465.0 186.2 L520.3 213.3" stroke="#68748c" stroke-width="1.0" fill="none"/><path d="M510.0 216.0 L506.0 218.0 L506.0 220.0 L510.0 218.0 Z" fill="#8b99b6"/><path d="M510.0 216.0 L506.0 218.0" stroke="#67748c" stroke-width="1.0" fill="none"/><path d="M464.2 207.8 L476.4 202.2 L476.4 206.7 L464.2 212.3 Z" fill="#8c9ab6"/><path d="M464.2 207.8 L476.4 202.2" stroke="#68748c" stroke-width="1.0" fill="none"/><path d="M476.4 202.2 L522.0 225.0 L522.0 230.6 L476.4 207.8 Z" fill="#aab8d1"/><path d="M476.4 202.2 L522.0 225.0" stroke="#67748c" stroke-width="1.0" fill="none"/><path d="M465.0 209.1 L523.1 239.1 L523.1 241.4 L465.0 211.4 Z" fill="#a9b7d1"/><path d="M465.0 209.1 L523.1 239.1" stroke="#67738c" stroke-width="1.0" fill="none"/><path d="M465.0 220.1 L512.1 245.1 L512.1 247.4 L465.0 222.4 Z" fill="#a9b6d1"/><path d="M465.0 220.1 L512.1 245.1" stroke="#66738c" stroke-width="1.0" fill="none"/><path d="M465.0 231.0 L499.0 250.0 L499.0 252.3 L465.0 233.3 Z" fill="#a8b6d1"/><path d="M465.0 231.0 L499.0 250.0" stroke="#66738c" stroke-width="1.0" fill="none"/><path d="M498.7 220.0 L494.2 222.8 L494.2 224.8 L498.7 222.0 Z" fill="#8a99b6"/><path d="M498.7 220.0 L494.2 222.8" stroke="#67738c" stroke-width="1.0" fill="none"/><path d="M504.8 223.3 L500.3 226.1 L500.3 228.1 L504.8 225.3 Z" fill="#8a99b6"/><path d="M504.8 223.3 L500.3 226.1" stroke="#67738c" stroke-width="1.0" fill="none"/><path d="M495.3 227.8 L488.1 231.7 L488.1 233.7 L495.3 229.8 Z" fill="#8998b6"/><path d="M495.3 227.8 L488.1 231.7" stroke="#66738c" stroke-width="1.0" fill="none"/><path d="M488.7 224.4 L482.0 227.8 L482.0 229.8 L488.7 226.4 Z" fill="#8a99b6"/><path d="M488.7 224.4 L482.0 227.8" stroke="#67738c" stroke-width="1.0" fill="none"/><path d="M522.1 228.1 L479.0 249.1 L479.0 255.3 L522.1 234.3 Z" fill="#8898b5"/><path d="M522.1 228.1 L479.0 249.1" stroke="#66738c" stroke-width="1.0" fill="none"/><path d="M478.0 246.0 L522.6 267.2 L522.6 273.0 L478.0 251.8 Z" fill="#a6b4d0"/><path d="M478.0 246.0 L522.6 267.2" stroke="#65728c" stroke-width="1.0" fill="none"/><path d="M500.9 242.8 L510.9 247.2 L510.9 249.4 L500.9 245.0 Z" fill="#a7b5d1"/><path d="M500.9 242.8 L510.9 247.2" stroke="#66738c" stroke-width="1.0" fill="none"/><path d="M489.8 237.8 L499.8 242.2 L499.8 244.4 L489.8 240.0 Z" fill="#a8b6d1"/><path d="M489.8 237.8 L499.8 242.2" stroke="#66738c" stroke-width="1.0" fill="none"/><path d="M465.3 248.3 L474.2 244.4 L474.2 247.9 L465.3 251.8 Z" fill="#8797b5"/><path d="M465.3 248.3 L474.2 244.4" stroke="#65728c" stroke-width="1.0" fill="none"/><path d="M510.3 255.0 L510.3 260.0" stroke="#667084" stroke-width="1.0" stroke-opacity="1" fill="none"/><path d="M477.9 111.8 L487.9 106.0 L487.9 109.9 L477.9 115.7 Z" fill="#96a1b7"/><path d="M477.9 111.8 L487.9 106.0" stroke="#6d788d" stroke-width="1.0" fill="none"/><path d="M457.2 118.4 L475.4 111.4 L475.4 114.7 L457.2 121.7 Z" fill="#95a1b7"/><path d="M457.2 118.4 L475.4 111.4" stroke="#6d788d" stroke-width="1.0" fill="none"/><path d="M499.5 111.8 L441.4 138.3 L441.4 141.6 L499.5 115.1 Z" fill="#94a0b7"/><path d="M499.5 111.8 L441.4 138.3" stroke="#6c778d" stroke-width="1.0" fill="none"/><path d="M510.3 116.7 L448.9 145.8 L448.9 149.1 L510.3 120.1 Z" fill="#94a0b7"/><path d="M510.3 116.7 L448.9 145.8" stroke="#6c778d" stroke-width="1.0" fill="none"/><path d="M521.9 122.5 L463.8 149.9 L463.8 153.2 L521.9 125.9 Z" fill="#939fb7"/><path d="M521.9 122.5 L463.8 149.9" stroke="#6c778d" stroke-width="1.0" fill="none"/><path d="M477.9 111.8 L521.0 133.3 L521.0 138.0 L477.9 116.4 Z" fill="#b4bed2"/><path d="M477.9 111.8 L521.0 133.3" stroke="#6c778d" stroke-width="1.0" fill="none"/><path d="M457.2 120.9 L503.6 144.1 L503.6 148.4 L457.2 125.2 Z" fill="#b3bed2"/><path d="M457.2 120.9 L503.6 144.1" stroke="#6c778d" stroke-width="1.0" fill="none"/><path d="M521.0 133.8 L464.0 160.2 L464.0 165.2 L521.0 138.8 Z" fill="#929eb7"/><path d="M521.0 133.8 L464.0 160.2" stroke="#6b768d" stroke-width="1.0" fill="none"/><path d="M489.5 158.2 L506.9 166.5 L506.9 170.7 L489.5 162.4 Z" fill="#b0bbd2"/><path d="M489.5 158.2 L506.9 166.5" stroke="#6a768d" stroke-width="1.0" fill="none"/><path d="M524.1 134.2 L567.2 154.9 L567.2 160.2 L524.1 139.5 Z" fill="#b2bdd2"/><path d="M524.1 134.2 L567.2 154.9" stroke="#6b768d" stroke-width="1.0" fill="none"/><path d="M567.8 155.8 L523.3 178.9 L523.3 184.5 L567.8 161.4 Z" fill="#909db6"/><path d="M567.8 155.8 L523.3 178.9" stroke="#6a768c" stroke-width="1.0" fill="none"/><path d="M524.2 153.3 L464.5 180.7 L464.5 185.0 L524.2 157.6 Z" fill="#b8c4da"/><path d="M524.2 153.3 L464.5 180.7" stroke="#6a768d" stroke-width="1.0" fill="none"/><path d="M524.2 157.5 L465.3 184.8 L465.3 189.0 L524.2 161.7 Z" fill="#8f9db6"/><path d="M524.2 157.5 L465.3 184.8" stroke="#6a758c" stroke-width="1.0" fill="none"/><path d="M488.4 156.9 L520.6 173.3 L520.6 177.9 L488.4 161.5 Z" fill="#b0bbd2"/><path d="M488.4 156.9 L520.6 173.3" stroke="#6a768d" stroke-width="1.0" fill="none"/><path d="M520.6 172.6 L477.1 190.9 L477.1 193.9 L520.6 175.6 Z" fill="#b7c3d9"/><path d="M520.6 172.6 L477.1 190.9" stroke="#69758c" stroke-width="1.0" fill="none"/><path d="M520.6 175.4 L477.1 193.7 L477.1 198.1 L520.6 179.8 Z" fill="#8e9cb6"/><path d="M520.6 175.4 L477.1 193.7" stroke="#69758c" stroke-width="1.0" fill="none"/><path d="M494.1 183.0 L478.4 190.3 L478.4 193.9 L494.1 186.6 Z" fill="#8e9bb6"/><path d="M494.1 183.0 L478.4 190.3" stroke="#69758c" stroke-width="1.0" fill="none"/><path d="M477.6 190.5 L477.6 197.0" stroke="#667084" stroke-width="0.9" stroke-opacity="1" fill="none"/><path d="M385.4 154.4 L432.2 133.8 L432.2 138.8 L385.4 159.4 Z" fill="#929fb7"/><path d="M385.4 154.4 L432.2 133.8" stroke="#6b778d" stroke-width="1.0" fill="none"/><path d="M385.4 158.7 L404.0 150.7 L404.0 154.4 L385.4 162.4 Z" fill="#919eb7"/><path d="M385.4 158.7 L404.0 150.7" stroke="#6b768d" stroke-width="1.0" fill="none"/><path d="M385.1 154.1 L385.1 162.4" stroke="#7a8596" stroke-width="1.0" stroke-opacity="1" fill="none"/><path d="M335.1 153.2 L352.5 162.0 L352.5 166.3 L335.1 157.5 Z" fill="#b0bcd2"/><path d="M335.1 153.2 L352.5 162.0" stroke="#6a768d" stroke-width="1.0" fill="none"/><path d="M351.2 161.5 L353.9 161.5 L367.1 144.1 L364.5 144.1 Z" fill="#b2bccf" fill-opacity="0.95"/><path d="M353.9 161.5 L367.1 144.1" stroke="#7f8a9c" stroke-width="0.5" stroke-opacity="1" fill="none"/><path d="M372.0 162.4 L374.6 162.4 L398.3 133.8 L395.7 133.8 Z" fill="#b2bccf" fill-opacity="0.95"/><path d="M374.6 162.4 L398.3 133.8" stroke="#7f8a9c" stroke-width="0.5" stroke-opacity="1" fill="none"/><path d="M395.7 159.9 L399.0 159.9 L430.2 123.9 L426.9 123.9 Z" fill="#b2bccf" fill-opacity="0.95"/><path d="M399.0 159.9 L430.2 123.9" stroke="#7f8a9c" stroke-width="0.5" stroke-opacity="1" fill="none"/><path d="M417.6 162.4 L420.2 162.4 L431.5 148.3 L428.9 148.3 Z" fill="#b2bccf" fill-opacity="0.95"/><path d="M420.2 162.4 L431.5 148.3" stroke="#7f8a9c" stroke-width="0.5" stroke-opacity="1" fill="none"/><path d="M335.1 153.2 L430.5 107.9 L430.5 112.6 Z" fill="#9aa5b8" fill-opacity="0.95"/><path d="M335.1 153.2 L430.5 112.6 L430.5 117.2 Z" fill="#8f9aad" fill-opacity="0.9"/><path d="M335.1 153.2 L430.5 117.2 L430.5 122.9 Z" fill="#a3aec2" fill-opacity="0.92"/><path d="M335.1 153.2 L430.5 107.9" stroke="#5e6878" stroke-width="0.8" stroke-opacity="1" fill="none"/><path d="M335.1 153.2 L430.5 114.6" stroke="#5d6677" stroke-width="0.9" stroke-opacity="0.85" fill="none" stroke-dasharray="0.8 1.2"/><path d="M335.1 153.2 L430.5 122.5" stroke="#e6ebf3" stroke-width="0.8" stroke-opacity="0.85" fill="none" stroke-dasharray="0.7 1.1"/><path d="M335.1 153.2 L425.5 129.2" stroke="#566070" stroke-width="0.5" stroke-opacity="1" fill="none" stroke-dasharray="1 1"/><path d="M432.0 133.8 L477.1 155.4 L477.1 161.0 L432.0 139.5 Z" fill="#f2e600" fill-opacity="1"/><path d="M432.0 133.8 L477.1 155.4" stroke="#fbf57a" stroke-width="0.6" stroke-opacity="1" fill="none"/><path d="M430.3 123.4 L434.3 123.4 L465.0 162.4 L461.0 162.4 Z" fill="#b2bccf" fill-opacity="0.95"/><path d="M434.3 123.4 L465.0 162.4" stroke="#7f8a9c" stroke-width="0.5" stroke-opacity="1" fill="none"/><path d="M460.8 132.2 L464.1 132.2 L487.4 162.4 L484.1 162.4 Z" fill="#b2bccf" fill-opacity="0.95"/><path d="M464.1 132.2 L487.4 162.4" stroke="#7f8a9c" stroke-width="0.5" stroke-opacity="1" fill="none"/><path d="M493.0 144.4 L496.0 144.4 L510.4 162.4 L507.4 162.4 Z" fill="#b2bccf" fill-opacity="0.95"/><path d="M496.0 144.4 L510.4 162.4" stroke="#7f8a9c" stroke-width="0.5" stroke-opacity="1" fill="none"/><path d="M427.6 149.1 L430.3 149.1 L423.7 158.2 L421.0 158.2 Z" fill="#b2bccf" fill-opacity="0.95"/><path d="M430.3 149.1 L423.7 158.2" stroke="#7f8a9c" stroke-width="0.5" stroke-opacity="1" fill="none"/><path d="M430.6 107.9 L525.2 153.2 L430.6 112.6 Z" fill="#9aa5b8" fill-opacity="0.95"/><path d="M430.6 112.6 L525.2 153.2 L430.6 117.2 Z" fill="#8f9aad" fill-opacity="0.9"/><path d="M430.6 117.2 L525.2 153.2 L430.6 122.9 Z" fill="#a3aec2" fill-opacity="0.92"/><path d="M430.6 107.9 L525.2 153.2" stroke="#5e6878" stroke-width="0.8" stroke-opacity="1" fill="none"/><path d="M430.6 114.6 L525.2 153.2" stroke="#5d6677" stroke-width="0.9" stroke-opacity="0.85" fill="none" stroke-dasharray="0.8 1.2"/><path d="M430.6 122.5 L525.2 153.2" stroke="#e6ebf3" stroke-width="0.8" stroke-opacity="0.85" fill="none" stroke-dasharray="0.7 1.1"/><path d="M434.0 128.3 L525.2 153.2" stroke="#566070" stroke-width="0.5" stroke-opacity="1" fill="none" stroke-dasharray="1 1"/><path d="M430.3 107.3 L430.3 162.4" stroke="#a2acbd" stroke-width="2.0" stroke-opacity="1" fill="none"/><path d="M430.6 107.3 L430.6 120.9" stroke="#343a44" stroke-width="1.6" stroke-opacity="1" fill="none"/><path d="M463.8 162.6 L466.4 162.6 L477.2 177.1 L474.6 177.1 Z" fill="#b2bccf" fill-opacity="0.95"/><path d="M466.4 162.6 L477.2 177.1" stroke="#7f8a9c" stroke-width="0.5" stroke-opacity="1" fill="none"/><path d="M477.7 152.5 L480.3 152.5 L494.2 168.9 L491.6 168.9 Z" fill="#b2bccf" fill-opacity="0.95"/><path d="M480.3 152.5 L494.2 168.9" stroke="#7f8a9c" stroke-width="0.5" stroke-opacity="1" fill="none"/><path d="M497.2 150.0 L499.8 150.0 L508.6 161.3 L506.0 161.3 Z" fill="#b2bccf" fill-opacity="0.95"/><path d="M499.8 150.0 L508.6 161.3" stroke="#7f8a9c" stroke-width="0.5" stroke-opacity="1" fill="none"/></svg>
<div class="b" style="left:208.30px;top:162.30px;width:256.80px;height:237.40px;background:#ffffc6;border:0.9px solid #7a7a6a;box-sizing:border-box;"></div>
<span class="t" style="left:211.60px;transform-origin:0 0;top:165.18px;font-size:20.60px;line-height:20.60px;color:#111;font-weight:bold;transform:scale(0.3725,0.5);">Beam</span>
<span class="t" style="left:214.20px;transform-origin:0 0;top:181.81px;font-size:18.40px;line-height:18.40px;color:#111;font-weight:bold;transform:scale(0.3900,0.5);">Identification</span>
<div class="b" style="left:263.00px;top:186.10px;width:198.40px;height:0.80px;background:#55554a;"></div>
<span class="t" style="left:214.20px;transform-origin:0 0;top:195.95px;font-size:18.20px;line-height:18.20px;color:#a3a394;font-weight:normal;transform:scale(0.3710,0.5);">Building Element Construction Type</span>
<span class="t" style="left:326.70px;transform-origin:0 0;top:195.95px;font-size:18.20px;line-height:18.20px;color:#1a1a1a;font-weight:normal;transform:scale(0.3660,0.5);">8 x 16 (Perfil rectangular)</span>
<span class="t" style="left:214.20px;transform-origin:0 0;top:210.15px;font-size:18.20px;line-height:18.20px;color:#a3a394;font-weight:normal;transform:scale(0.3710,0.5);">Building Storey name</span>
<span class="t" style="left:326.70px;transform-origin:0 0;top:210.15px;font-size:18.20px;line-height:18.20px;color:#1a1a1a;font-weight:normal;transform:scale(0.3660,0.5);">Level 5</span>
<span class="t" style="left:214.20px;transform-origin:0 0;top:224.35px;font-size:18.20px;line-height:18.20px;color:#a3a394;font-weight:normal;transform:scale(0.3710,0.5);">Container Name</span>
<span class="t" style="left:326.70px;transform-origin:0 0;top:224.35px;font-size:18.20px;line-height:18.20px;color:#1a1a1a;font-weight:normal;transform:scale(0.3660,0.5);">Level 5</span>
<span class="t" style="left:214.20px;transform-origin:0 0;top:238.55px;font-size:18.20px;line-height:18.20px;color:#a3a394;font-weight:normal;transform:scale(0.3710,0.5);">Container Object Class</span>
<span class="t" style="left:326.70px;transform-origin:0 0;top:238.55px;font-size:18.20px;line-height:18.20px;color:#1a1a1a;font-weight:normal;transform:scale(0.3660,0.5);">Building Storey</span>
<span class="t" style="left:214.20px;transform-origin:0 0;top:252.75px;font-size:18.20px;line-height:18.20px;color:#a3a394;font-weight:normal;transform:scale(0.3710,0.5);">Name (type)</span>
<span class="t" style="left:326.70px;transform-origin:0 0;top:252.75px;font-size:18.20px;line-height:18.20px;color:#1a1a1a;font-weight:normal;transform:scale(0.3660,0.5);">8 x 16 (Perfil rectangular)</span>
<span class="t" style="left:214.20px;transform-origin:0 0;top:266.95px;font-size:18.20px;line-height:18.20px;color:#a3a394;font-weight:normal;transform:scale(0.3710,0.5);">Name</span>
<span class="t" style="left:326.70px;transform-origin:0 0;top:266.95px;font-size:18.20px;line-height:18.20px;color:#1a1a1a;font-weight:normal;transform:scale(0.3660,0.5);">Concrete-Rectangular Beam:8 x 16:232884</span>
<span class="t" style="left:214.20px;transform-origin:0 0;top:281.15px;font-size:18.20px;line-height:18.20px;color:#a3a394;font-weight:normal;transform:scale(0.3710,0.5);">Object Class</span>
<span class="t" style="left:326.70px;transform-origin:0 0;top:281.15px;font-size:18.20px;line-height:18.20px;color:#1a1a1a;font-weight:normal;transform:scale(0.3660,0.5);">Beam</span>
<span class="t" style="left:214.20px;transform-origin:0 0;top:295.35px;font-size:18.20px;line-height:18.20px;color:#a3a394;font-weight:normal;transform:scale(0.3710,0.5);">Object type</span>
<span class="t" style="left:326.70px;transform-origin:0 0;top:295.35px;font-size:18.20px;line-height:18.20px;color:#1a1a1a;font-weight:normal;transform:scale(0.3660,0.5);">8 x 16 (Perfil rectangular)</span>
<span class="t" style="left:214.20px;transform-origin:0 0;top:309.55px;font-size:18.20px;line-height:18.20px;color:#a3a394;font-weight:normal;transform:scale(0.3710,0.5);">Predefined type (type)</span>
<span class="t" style="left:326.70px;transform-origin:0 0;top:309.55px;font-size:18.20px;line-height:18.20px;color:#1a1a1a;font-weight:normal;transform:scale(0.3660,0.5);">BEAM</span>
<span class="t" style="left:214.20px;transform-origin:0 0;top:323.75px;font-size:18.20px;line-height:18.20px;color:#a3a394;font-weight:normal;transform:scale(0.3710,0.5);">Tag</span>
<span class="t" style="left:326.70px;transform-origin:0 0;top:323.75px;font-size:18.20px;line-height:18.20px;color:#1a1a1a;font-weight:normal;transform:scale(0.3660,0.5);">232884</span>
<span class="t" style="left:214.20px;transform-origin:0 0;top:337.86px;font-size:18.40px;line-height:18.40px;color:#111;font-weight:bold;transform:scale(0.3900,0.5);">Measure Values</span>
<div class="b" style="left:274.30px;top:342.35px;width:187.10px;height:0.80px;background:#55554a;"></div>
<span class="t" style="left:214.20px;transform-origin:0 0;top:352.15px;font-size:18.20px;line-height:18.20px;color:#a3a394;font-weight:normal;transform:scale(0.3710,0.5);">Net volume</span>
<span class="t" style="right:191.30px;transform-origin:100% 0;top:352.15px;font-size:18.20px;line-height:18.20px;color:#1a1a1a;font-weight:normal;transform:scale(0.3675,0.5);">0.48</span>
<span class="t" style="left:452.30px;transform-origin:0 0;top:352.15px;font-size:18.20px;line-height:18.20px;color:#1a1a1a;font-weight:normal;transform:scale(0.3675,0.5);">m3</span>
<span class="t" style="left:214.20px;transform-origin:0 0;top:366.35px;font-size:18.20px;line-height:18.20px;color:#a3a394;font-weight:normal;transform:scale(0.3710,0.5);">Nominal length</span>
<span class="t" style="right:191.30px;transform-origin:100% 0;top:366.35px;font-size:18.20px;line-height:18.20px;color:#1a1a1a;font-weight:normal;transform:scale(0.3675,0.5);">5.867</span>
<span class="t" style="left:452.30px;transform-origin:0 0;top:366.35px;font-size:18.20px;line-height:18.20px;color:#1a1a1a;font-weight:normal;transform:scale(0.3675,0.5);">m</span>
<span class="t" style="left:271.80px;transform-origin:0 0;top:390.21px;font-size:14.40px;line-height:14.40px;color:#222;font-weight:normal;transform:scale(0.3900,0.5);">Hold down Ctrl or Ctrl+Shift to see more information</span>
</body></html>
